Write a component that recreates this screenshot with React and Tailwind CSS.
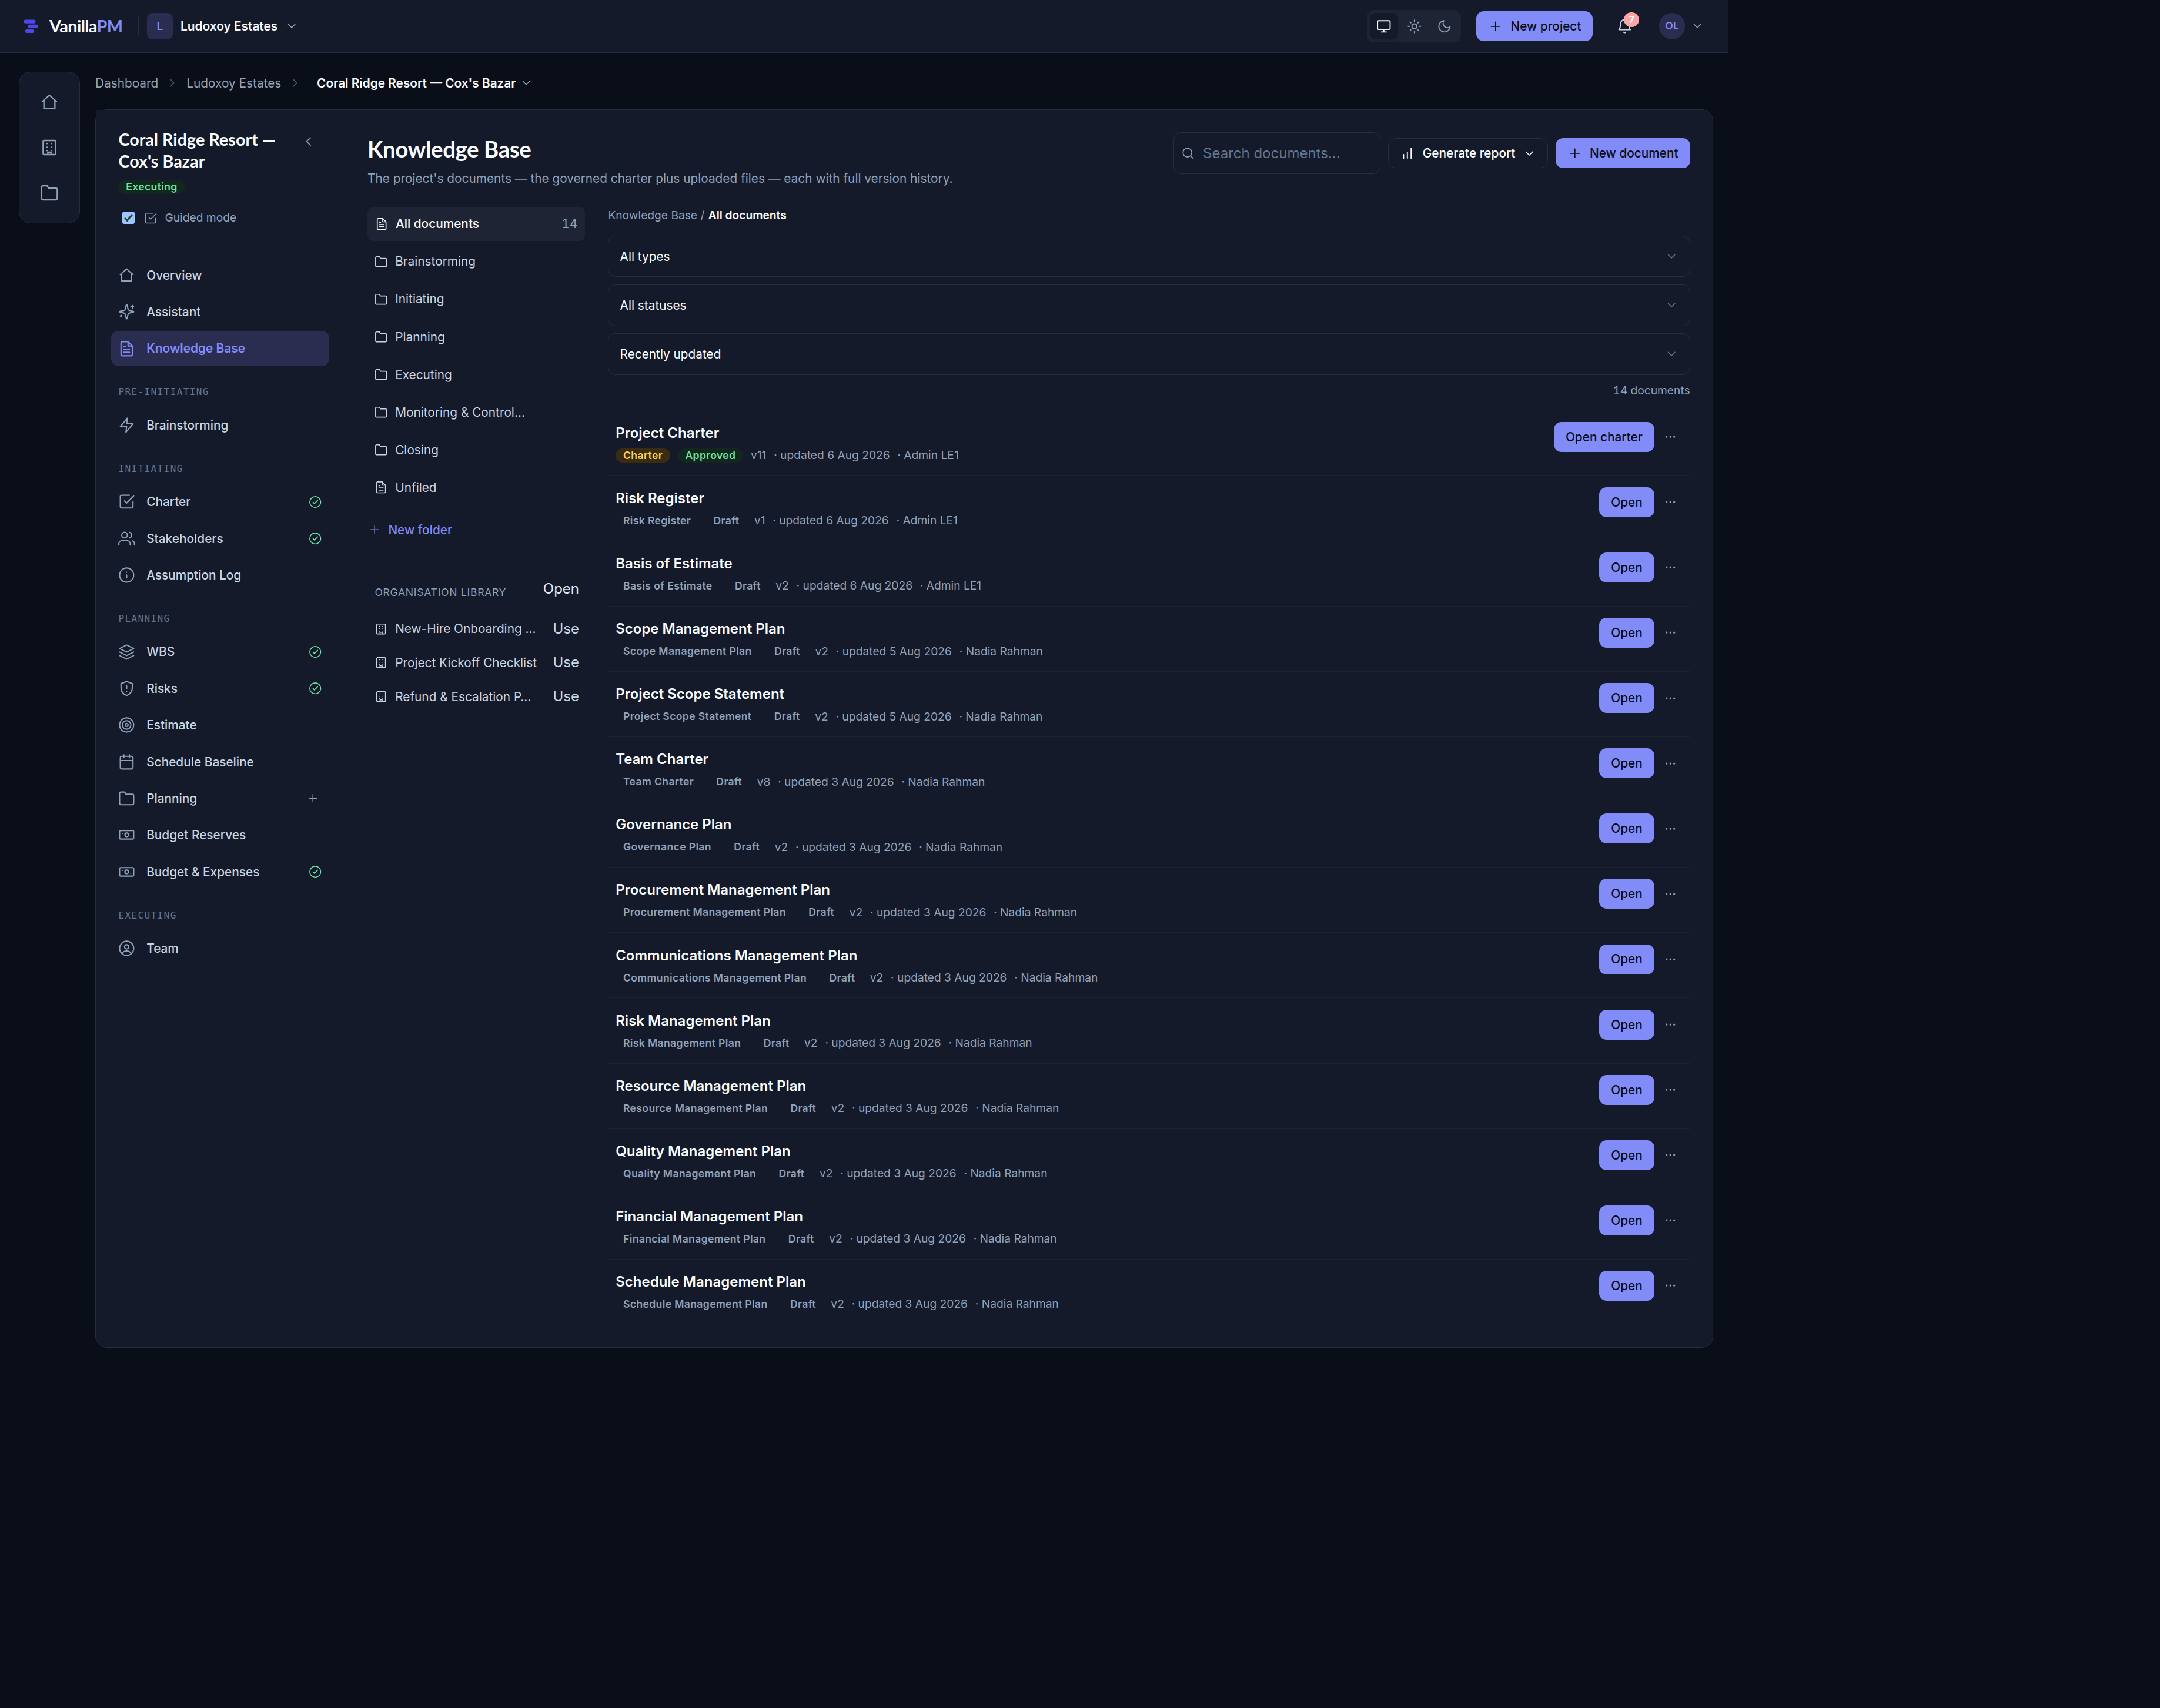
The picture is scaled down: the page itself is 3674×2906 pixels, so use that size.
const icons = {
  home: ["M3 11l9-8 9 8", "M5 10v10h14V10"],
  building: [
    "M5.5 3h13A1.5 1.5 0 0 1 20 4.5v15a1.5 1.5 0 0 1-1.5 1.5h-13A1.5 1.5 0 0 1 4 19.5v-15A1.5 1.5 0 0 1 5.5 3z",
    "M9 7h.01M15 7h.01M9 11.5h.01M15 11.5h.01M9 16h.01M15 16h.01",
    "M10 21v-3h4v3",
  ],
  folder: ["M22 19a2 2 0 0 1-2 2H4a2 2 0 0 1-2-2V5a2 2 0 0 1 2-2h5l2 3h9a2 2 0 0 1 2 2z"],
  sparkles: [
    "M9.937 15.5A2 2 0 0 0 8.5 14.063l-6.135-1.582a.5.5 0 0 1 0-.962L8.5 9.936A2 2 0 0 0 9.937 8.5l1.582-6.135a.5.5 0 0 1 .963 0L14.063 8.5A2 2 0 0 0 15.5 9.937l6.135 1.581a.5.5 0 0 1 0 .964L15.5 14.063a2 2 0 0 0-1.437 1.437l-1.582 6.135a.5.5 0 0 1-.963 0z",
    "M20 3v4M22 5h-4M4 17v2M5 18H3",
  ],
  file: [
    "M14 2H6a2 2 0 0 0-2 2v16a2 2 0 0 0 2 2h12a2 2 0 0 0 2-2V8z",
    "M14 2v6h6M16 13H8M16 17H8M10 9H8",
  ],
  bolt: ["M13 2 3 14h9l-1 8 10-12h-9z"],
  check: ["M9 11l3 3L22 4", "M21 12v7a2 2 0 0 1-2 2H5a2 2 0 0 1-2-2V5a2 2 0 0 1 2-2h11"],
  users: [
    "M17 21v-2a4 4 0 0 0-4-4H5a4 4 0 0 0-4 4v2",
    "M9 3a4 4 0 1 1 0 8 4 4 0 0 1 0-8z",
    "M23 21v-2a4 4 0 0 0-3-3.87M16 3.13a4 4 0 0 1 0 7.75",
  ],
  info: ["M12 2a10 10 0 1 1 0 20 10 10 0 0 1 0-20z", "M12 16v-4M12 8h.01"],
  layers: ["M12 2 2 7l10 5 10-5z", "M2 12l10 5 10-5", "M2 17l10 5 10-5"],
  shield: ["M12 2l8 3v6c0 5.2-3.4 9-8 11-4.6-2-8-5.8-8-11V5z", "M12 8v4M12 16h.01"],
  target: [
    "M12 2a10 10 0 1 1 0 20 10 10 0 0 1 0-20z",
    "M12 6a6 6 0 1 1 0 12 6 6 0 0 1 0-12z",
    "M12 10a2 2 0 1 1 0 4 2 2 0 0 1 0-4z",
  ],
  calendar: [
    "M5 4h14a2 2 0 0 1 2 2v14a2 2 0 0 1-2 2H5a2 2 0 0 1-2-2V6a2 2 0 0 1 2-2z",
    "M16 2v4M8 2v4M3 10h18",
  ],
  cash: [
    "M3.5 6h17A1.5 1.5 0 0 1 22 7.5v9a1.5 1.5 0 0 1-1.5 1.5h-17A1.5 1.5 0 0 1 2 16.5v-9A1.5 1.5 0 0 1 3.5 6z",
    "M12 9.5a2.5 2.5 0 1 1 0 5 2.5 2.5 0 0 1 0-5z",
    "M6 10h.01M18 14h.01",
  ],
  user: [
    "M12 2a10 10 0 1 1 0 20 10 10 0 0 1 0-20z",
    "M12 7a3 3 0 1 1 0 6 3 3 0 0 1 0-6z",
    "M6 19c1.2-2.2 3.4-3.2 6-3.2s4.8 1 6 3.2",
  ],
  done: ["M12 2a10 10 0 1 1 0 20 10 10 0 0 1 0-20z", "M8 12.2l2.5 2.7L16.3 9"],
  plus: ["M12 5v14M5 12h14"],
  down: ["M6 9l6 6 6-6"],
  left: ["M15 18l-6-6 6-6"],
  right: ["M9 18l6-6-6-6"],
  monitor: [
    "M4 3h16a2 2 0 0 1 2 2v10a2 2 0 0 1-2 2H4a2 2 0 0 1-2-2V5a2 2 0 0 1 2-2z",
    "M8 21h8M12 17v4",
  ],
  sun: [
    "M12 8a4 4 0 1 1 0 8 4 4 0 0 1 0-8z",
    "M12 2v2M12 20v2M4.93 4.93l1.41 1.41M17.66 17.66l1.41 1.41M2 12h2M20 12h2M6.34 17.66l-1.41 1.41M19.07 4.93l-1.41 1.41",
  ],
  moon: ["M21 12.79A9 9 0 1 1 11.21 3 7 7 0 0 0 21 12.79z"],
  bell: ["M6 9a6 6 0 0 1 12 0c0 6 2 8 2 8H4s2-2 2-8", "M10.8 20.7a1.6 1.6 0 0 0 2.4 0"],
  search: ["M11 4a7 7 0 1 1 0 14 7 7 0 0 1 0-14z", "M20 20l-4-4"],
  bars: ["M6 20v-6M12 20V10M18 20V4"],
  dots: ["M5 12h.01M12 12h.01M19 12h.01"],
};

const Icon = ({ name, className = "size-[22.4px]", stroke = 1.75 }) => (
  <svg
    viewBox="0 0 24 24"
    fill="none"
    stroke="currentColor"
    strokeWidth={stroke}
    strokeLinecap="round"
    strokeLinejoin="round"
    className={`shrink-0 ${className}`}
    aria-hidden="true"
  >
    {icons[name].map((d) => (
      <path key={d} d={d} />
    ))}
  </svg>
);

const navGroups = [
  {
    items: [
      { icon: "home", label: "Overview" },
      { icon: "sparkles", label: "Assistant" },
      { icon: "file", label: "Knowledge Base", active: true },
    ],
  },
  { title: "PRE-INITIATING", items: [{ icon: "bolt", label: "Brainstorming" }] },
  {
    title: "INITIATING",
    items: [
      { icon: "check", label: "Charter", done: true },
      { icon: "users", label: "Stakeholders", done: true },
      { icon: "info", label: "Assumption Log" },
    ],
  },
  {
    title: "PLANNING",
    items: [
      { icon: "layers", label: "WBS", done: true },
      { icon: "shield", label: "Risks", done: true },
      { icon: "target", label: "Estimate" },
      { icon: "calendar", label: "Schedule Baseline" },
      { icon: "folder", label: "Planning", add: true },
      { icon: "cash", label: "Budget Reserves" },
      { icon: "cash", label: "Budget & Expenses", done: true },
    ],
  },
  { title: "EXECUTING", items: [{ icon: "user", label: "Team" }] },
];

const folders = [
  { icon: "folder", label: "Brainstorming" },
  { icon: "folder", label: "Initiating" },
  { icon: "folder", label: "Planning" },
  { icon: "folder", label: "Executing" },
  { icon: "folder", label: "Monitoring & Control…" },
  { icon: "folder", label: "Closing" },
  { icon: "file", label: "Unfiled" },
];

const library = ["New-Hire Onboarding …", "Project Kickoff Checklist", "Refund & Escalation P…"];

const documents = [
  { name: "Project Charter", type: "Charter", version: "v11", date: "6 Aug 2026", by: "Admin LE1", charter: true },
  { name: "Risk Register", version: "v1", date: "6 Aug 2026", by: "Admin LE1" },
  { name: "Basis of Estimate", version: "v2", date: "6 Aug 2026", by: "Admin LE1" },
  { name: "Scope Management Plan", version: "v2", date: "5 Aug 2026", by: "Nadia Rahman" },
  { name: "Project Scope Statement", version: "v2", date: "5 Aug 2026", by: "Nadia Rahman" },
  { name: "Team Charter", version: "v8", date: "3 Aug 2026", by: "Nadia Rahman" },
  { name: "Governance Plan", version: "v2", date: "3 Aug 2026", by: "Nadia Rahman" },
  { name: "Procurement Management Plan", version: "v2", date: "3 Aug 2026", by: "Nadia Rahman" },
  { name: "Communications Management Plan", version: "v2", date: "3 Aug 2026", by: "Nadia Rahman" },
  { name: "Risk Management Plan", version: "v2", date: "3 Aug 2026", by: "Nadia Rahman" },
  { name: "Resource Management Plan", version: "v2", date: "3 Aug 2026", by: "Nadia Rahman" },
  { name: "Quality Management Plan", version: "v2", date: "3 Aug 2026", by: "Nadia Rahman" },
  { name: "Financial Management Plan", version: "v2", date: "3 Aug 2026", by: "Nadia Rahman" },
  { name: "Schedule Management Plan", version: "v2", date: "3 Aug 2026", by: "Nadia Rahman" },
];

const Badge = ({ children, tone = "text-slate-400" }) => (
  <span
    className={`inline-flex h-6 items-center rounded-full px-[12.8px] text-[17.6px] leading-none font-semibold tracking-[0.02em] ${tone}`}
  >
    {children}
  </span>
);

const PrimaryButton = ({ icon, children }) => (
  <button className="flex h-[51px] items-center gap-[12.8px] rounded-[12.8px] bg-[#818cf8] px-5 text-[20.8px] font-medium text-[#0a0e18]">
    {icon ? <Icon name={icon} className="size-[25.6px]" stroke={1.6} /> : null}
    {children}
  </button>
);

const TopBar = () => (
  <header className="flex h-[90px] w-[2940px] items-center border-b border-[#262e3e] bg-[#141a29] pr-[41.6px] pl-9">
    <svg viewBox="0 0 32 32" className="ml-px size-8" aria-hidden="true">
      <rect x="3.5" y="4.5" width="20" height="6.2" rx="3" fill="#4f46e5" />
      <rect x="10.5" y="12.8" width="17.5" height="6.2" rx="3" fill="#4f46e5" />
      <rect x="5.7" y="21" width="15.5" height="6" rx="3" fill="#4f46e5" />
    </svg>
    <span className="ml-[15px] w-[126px] font-[Lato,sans-serif] text-[28.8px] leading-none font-bold tracking-[-0.02em] text-slate-50">
      Vanilla<span className="text-[#818cf8]">PM</span>
    </span>
    <span className="ml-[25px] h-8 w-px bg-[#262e3e]" />
    <span className="ml-[13.5px] flex size-[44.8px] items-center justify-center rounded-[9.6px] bg-[#2b2d50] text-[19.2px] font-semibold text-[#818cf8]">
      L
    </span>
    <span className="ml-[12.8px] font-semibold text-slate-50">Ludoxoy Estates</span>
    <Icon name="down" className="ml-[12.8px] size-[22.4px] text-slate-400" />

    <div className="ml-auto flex gap-[3.2px] rounded-[12.8px] bg-[#1e2433] p-[4.8px]">
      <span className="flex h-[44.8px] w-12 items-center justify-center rounded-[9.6px] bg-[#141a29] text-slate-50 shadow-sm">
        <Icon name="monitor" className="size-[25.6px]" />
      </span>
      <span className="flex h-[44.8px] w-12 items-center justify-center text-slate-400">
        <Icon name="sun" className="size-[25.6px]" />
      </span>
      <span className="flex h-[44.8px] w-12 items-center justify-center text-slate-400">
        <Icon name="moon" className="size-[25.6px]" />
      </span>
    </div>
    <div className="ml-[25.6px]">
      <PrimaryButton icon="plus">New project</PrimaryButton>
    </div>
    <div className="relative ml-[39.4px]">
      <Icon name="bell" className="block size-[28.8px] text-slate-300" />
      <span className="absolute -top-[9.5px] left-[13.5px] flex h-[25.6px] w-[26px] items-center justify-center rounded-full bg-[#fca5a5] text-[16px] leading-none font-bold text-white">
        7
      </span>
    </div>
    <span className="ml-11 flex size-[44.8px] items-center justify-center rounded-full bg-[#2b2d50] text-[17.6px] font-semibold text-[#818cf8]">
      OL
    </span>
    <Icon name="down" className="ml-[9.6px] size-[22.4px] text-slate-400" />
  </header>
);

const Rail = () => (
  <nav className="flex h-[258px] w-[104px] shrink-0 flex-col items-center rounded-[20px] border border-[#262e3e] bg-[#141a29] py-[12.8px] text-slate-400">
    {["home", "building", "folder"].map((name) => (
      <span key={name} className="flex h-[76.8px] items-center">
        <Icon name={name} className="size-8" />
      </span>
    ))}
  </nav>
);

const Breadcrumbs = () => (
  <div className="flex h-[38.4px] items-center gap-[12.8px] text-slate-400">
    <span>Dashboard</span>
    <Icon name="right" className="size-[22.4px] text-slate-600" />
    <span>Ludoxoy Estates</span>
    <Icon name="right" className="size-[22.4px] text-slate-600" />
    <span className="ml-[12.8px] flex items-center gap-[6.4px] font-semibold text-slate-50">
      Coral Ridge Resort — Cox's Bazar
      <Icon name="down" className="size-[22.4px] text-slate-400" />
    </span>
  </div>
);

const NavItem = ({ item }) => (
  <li
    className={`flex h-[60.8px] items-center rounded-[12.8px] px-[12.8px] ${
      item.active ? "bg-[#2b2d50] font-semibold text-[#818cf8]" : "font-medium text-slate-300"
    }`}
  >
    <Icon name={item.icon} className={`-ml-[0.6px] size-[28.8px] ${item.active ? "" : "text-slate-400"}`} />
    <span className="ml-[19.6px] grow">{item.label}</span>
    {item.done ? <Icon name="done" className="size-[22.4px] text-[#6ce5a0]" /> : null}
    {item.add ? <Icon name="plus" stroke={1.5} className="mr-1 size-[22.4px] text-slate-400" /> : null}
  </li>
);

const ProjectNav = () => (
  <aside className="flex w-[424px] shrink-0 flex-col border-r border-[#262e3e]">
    <div className="bg-[#141a29] px-[25.6px]">
      <div className="border-b border-[#1b2231] px-[12.8px] pt-8 pb-6">
        <div className="flex items-start justify-between">
          <h2 className="w-[290px] font-[Lato,sans-serif] text-[28.8px] leading-[37.4px] font-bold text-slate-50">
            Coral Ridge Resort — Cox's Bazar
          </h2>
          <Icon name="left" className="mt-[9px] mr-[10px] size-[25.6px] text-slate-400" />
        </div>
        <div className="mt-3 flex">
          <Badge tone="bg-[#12281e] text-[#6ce5a0]">Executing</Badge>
        </div>
        <label className="mt-[25px] flex h-8 items-center pl-[6.4px] text-[19.2px] text-slate-400">
          <span className="flex size-[21px] items-center justify-center rounded-[3.5px] bg-[#99c8ff]">
            <svg viewBox="0 0 21 21" className="size-[21px]" fill="none" stroke="#3b3b3b" strokeWidth="3" aria-hidden="true">
              <path d="M4 11l4.2 4.2L17 5" />
            </svg>
          </span>
          <Icon name="check" className="ml-[16.5px] size-[22.4px]" stroke={1.6} />
          <span className="ml-[12.8px]">Guided mode</span>
        </label>
      </div>
    </div>
    <nav className="px-[25.6px] pt-[26px]">
      {navGroups.map((group) => (
        <div key={group.title || "top"}>
          {group.title ? (
            <h3 className="mt-8 mb-[13.6px] h-6 px-[12.8px] font-['DejaVu_Sans_Mono',monospace] text-[16px] leading-6 tracking-[1.4px] text-slate-500">
              {group.title}
            </h3>
          ) : null}
          <ul className="flex flex-col gap-[1.6px]">
            {group.items.map((item) => (
              <NavItem key={item.label} item={item} />
            ))}
          </ul>
        </div>
      ))}
    </nav>
  </aside>
);

const PageHeader = () => (
  <div className="flex h-[94.6px] items-start justify-between">
    <div className="pt-[5px]">
      <h1 className="font-[Lato,sans-serif] text-[38.4px] leading-[46px] font-bold tracking-[-0.4px] text-slate-50">
        Knowledge Base
      </h1>
      <p className="mt-[11.5px] leading-8 text-slate-400">
        The project's documents — the governed charter plus uploaded files — each with full version history.
      </p>
    </div>
    <div className="flex items-center gap-[12.8px]">
      <div className="flex h-[71px] w-[352px] items-center rounded-[12.8px] border border-[#262e3e] pl-[11px] text-[24px] text-slate-500">
        <Icon name="search" className="size-[25.6px] text-slate-400" stroke={1.6} />
        <span className="ml-3">Search documents...</span>
      </div>
      <button className="flex h-[51px] items-center gap-[12.8px] rounded-[12.8px] border border-[#262e3e] px-[19.2px] font-medium text-slate-50">
        <Icon name="bars" className="size-[25.6px]" />
        Generate report
        <Icon name="down" />
      </button>
      <PrimaryButton icon="plus">New document</PrimaryButton>
    </div>
  </div>
);

const FolderPanel = () => (
  <div className="w-[370px]">
    <ul className="flex flex-col gap-[6.4px]">
      <li className="flex h-[57.8px] items-center gap-[12.8px] rounded-[9.6px] bg-[#1e2433] px-[12.8px] font-medium text-slate-50">
        <Icon name="file" />
        <span className="grow">All documents</span>
        <span className="font-normal text-slate-400 tabular-nums">14</span>
      </li>
      {folders.map((folder) => (
        <li key={folder.label} className="flex h-[57.7px] items-center gap-[12.4px] px-[12.4px] text-slate-300">
          <Icon name={folder.icon} />
          <span>{folder.label}</span>
        </li>
      ))}
    </ul>
    <button className="mt-[17.5px] flex h-[51px] items-center gap-3 pl-px font-medium text-[#818cf8]">
      <Icon name="plus" stroke={1.5} />
      New folder
    </button>
    <div className="mt-[29px] border-t border-[#262e3e] pt-[25.6px] pr-[10px] pl-[12.4px] text-slate-300">
      <div className="flex h-[39px] items-center justify-between">
        <span className="pt-3 text-[17.6px] tracking-[0.04em] text-slate-400">ORGANISATION LIBRARY</span>
        <span className="text-[24px] text-slate-200">Open</span>
      </div>
      <ul className="mt-[19.4px]">
        {library.map((label) => (
          <li key={label} className="flex h-[57.8px] items-center gap-[12.4px]">
            <Icon name="building" />
            <span className="grow">{label}</span>
            <span className="text-[24px]">Use</span>
          </li>
        ))}
      </ul>
    </div>
  </div>
);

const DocumentRow = ({ doc }) => (
  <li className="flex h-[111.09px] items-start border-b border-[#1b2231] px-[12.8px] pt-[19.2px] last:border-transparent">
    <div className="grow">
      <h3 className="pt-px text-[24px] leading-9 font-semibold text-slate-50">{doc.name}</h3>
      <div className="mt-[5.4px] flex h-[28.8px] items-center gap-[12.8px] text-[19.2px] text-slate-400">
        <Badge tone={doc.charter ? "bg-[#3a2b12] text-[#fcd34d]" : undefined}>{doc.type || doc.name}</Badge>
        <Badge tone={doc.charter ? "bg-[#12281e] text-[#6ce5a0]" : undefined}>{doc.charter ? "Approved" : "Draft"}</Badge>
        <span>{doc.version}</span>
        <span>· updated {doc.date}</span>
        <span>· {doc.by}</span>
      </div>
    </div>
    <PrimaryButton>{doc.charter ? "Open charter" : "Open"}</PrimaryButton>
    <button className="ml-[6.4px] flex h-[51px] w-[41.6px] items-center justify-center text-slate-400">
      <Icon name="dots" stroke={3.4} />
    </button>
  </li>
);

const DocumentList = () => (
  <div className="grow">
    <p className="flex h-[29px] gap-[6.4px] text-[19.2px] leading-[29px] text-slate-400">
      <span>Knowledge Base /</span>
      <span className="font-semibold text-slate-50">All documents</span>
    </p>
    <div className="mt-5 flex flex-col gap-[12.8px]">
      {["All types", "All statuses", "Recently updated"].map((label) => (
        <div
          key={label}
          className="flex h-[70.4px] items-center justify-between rounded-[12.8px] border border-[#262e3e] px-[19.2px] text-slate-50"
        >
          {label}
          <Icon name="down" className="size-[22.4px] text-slate-500" />
        </div>
      ))}
    </div>
    <p className="mt-3 mb-5 h-[29px] text-right text-[19.2px] leading-[29px] text-slate-400 tabular-nums">14 documents</p>
    <ul>
      {documents.map((doc) => (
        <DocumentRow key={doc.name} doc={doc} />
      ))}
    </ul>
  </div>
);

const App = () => (
  <div className="min-h-[2906px] w-full bg-[#0a0e18] font-[Inter,sans-serif] text-[20.8px] leading-normal">
    <TopBar />
    <div className="flex w-[2940px] items-start gap-[26px] pt-8 pr-[26px] pl-8">
      <Rail />
      <main className="grow">
        <Breadcrumbs />
        <div className="mt-[25.6px] flex h-[2107px] rounded-[20px] border border-[#262e3e] bg-[#141a29]">
          <ProjectNav />
          <div className="grow p-[38.4px] pl-[38px]">
            <PageHeader />
            <div className="mt-8 flex gap-[39.4px]">
              <FolderPanel />
              <DocumentList />
            </div>
          </div>
        </div>
      </main>
    </div>
  </div>
);

export default App;
